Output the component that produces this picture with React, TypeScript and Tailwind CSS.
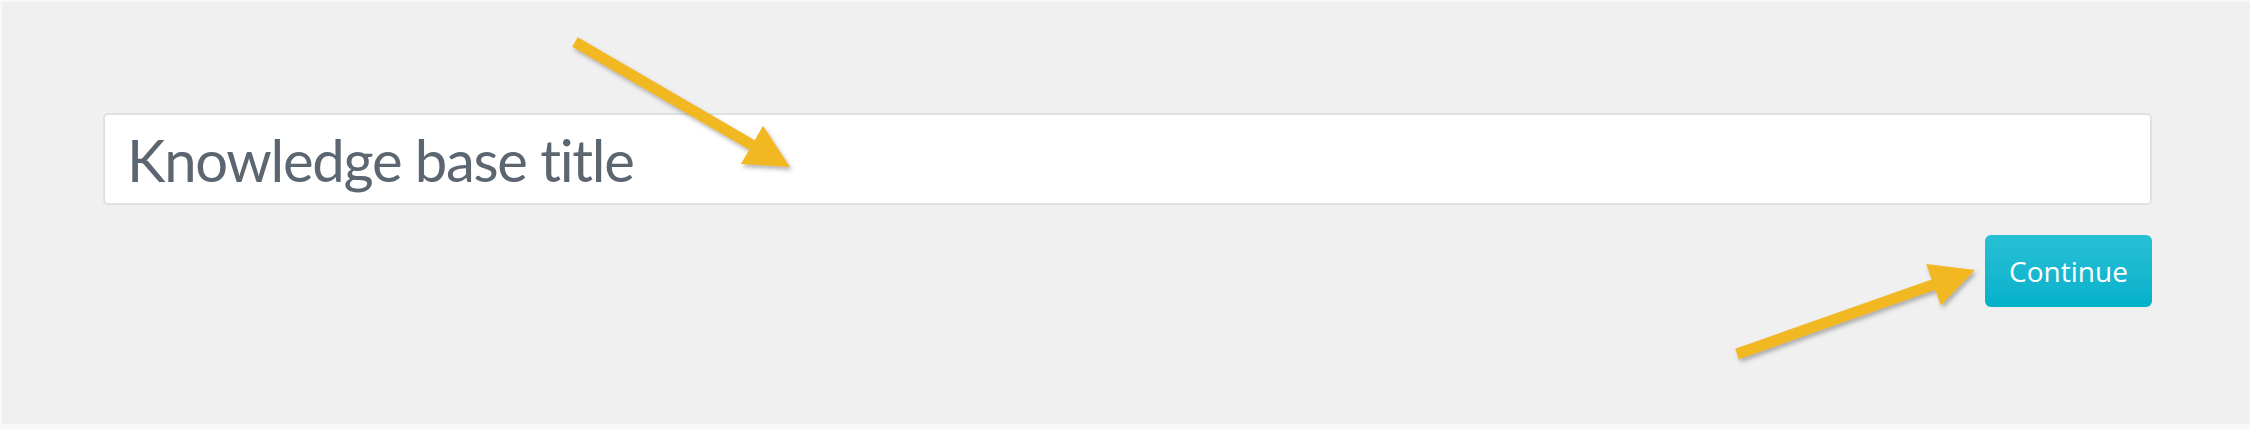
import React from 'react';

type Pt = [number, number];

// Builds a straight arrow outline from tail to tip
const arrowPoints = (tail: Pt, tip: Pt, shaft = 11, headLen = 44, headHalf = 22) => {
  const dx = tip[0] - tail[0];
  const dy = tip[1] - tail[1];
  const len = Math.hypot(dx, dy);
  const ux = dx / len;
  const uy = dy / len;
  const nx = -uy;
  const ny = ux;
  const bx = tip[0] - ux * headLen;
  const by = tip[1] - uy * headLen;
  const s = shaft / 2;
  const pts: Pt[] = [
    [tail[0] + nx * s, tail[1] + ny * s],
    [bx + nx * s, by + ny * s],
    [bx + nx * headHalf, by + ny * headHalf],
    tip,
    [bx - nx * headHalf, by - ny * headHalf],
    [bx - nx * s, by - ny * s],
    [tail[0] - nx * s, tail[1] - ny * s],
  ];
  return pts.map((p) => p.join(',')).join(' ');
};

const Callouts: React.FC = () => (
  <svg className="pointer-events-none absolute left-0 top-0" width={2250} height={430}>
    <defs>
      <filter id="arrow-shadow" x="-20%" y="-20%" width="140%" height="140%">
        <feDropShadow dx="2" dy="3" stdDeviation="2" floodColor="#5a5a5a" floodOpacity="0.45" />
      </filter>
    </defs>
    <g fill="#f2b824" filter="url(#arrow-shadow)">
      <polygon points={arrowPoints([575, 42], [790, 167])} />
      <polygon points={arrowPoints([1737, 354], [1975, 270])} />
    </g>
  </svg>
);

const App: React.FC = () => {
  return (
    <div className="relative h-[430px] w-[2250px] overflow-hidden bg-[#f9f9f9] pl-[2px] pt-[2px] pb-[6px]">
      <div className="flex h-full flex-col items-end bg-[#f0f0f0] pl-[101px] pr-[98px] pt-[111px]">
        <input
          type="text"
          placeholder="Knowledge base title"
          className="h-[92px] w-full rounded-[5px] border-2 border-[#dde1e6] bg-white pl-[22px] text-[58px] tracking-[-1.3px] text-[#5b6670] outline-none placeholder:text-[#5b6670]"
          style={{ fontFamily: 'Lato, "Open Sans", sans-serif', fontVariantLigatures: 'none' }}
        />
        <button
          className="mt-[30px] h-[72px] w-[167px] rounded-[6px] bg-gradient-to-b from-[#27c0d6] to-[#02b1ca] text-[28px] text-white"
          style={{ fontFamily: '"Open Sans", "Noto Sans", sans-serif' }}
        >
          Continue
        </button>
      </div>
      <Callouts />
    </div>
  );
};

export default App;
